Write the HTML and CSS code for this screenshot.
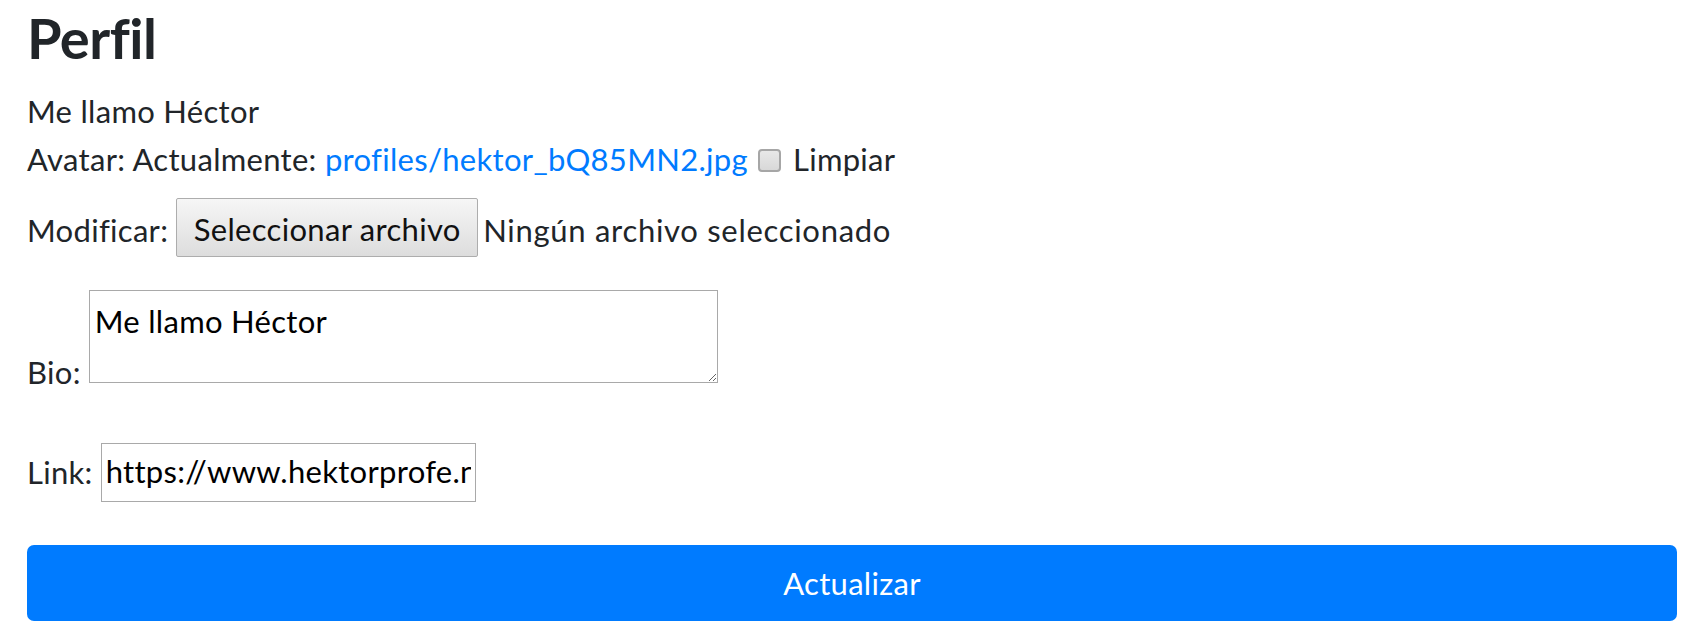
FILE: index.html
```html
<!DOCTYPE html>
<html lang="es">
<head>
<meta charset="utf-8">
<title>Perfil</title>
<link rel="stylesheet" href="styles.css">
</head>
<body>
<main class="page">
  <h1 class="title">Perfil</h1>
  <form class="form">
    <p class="line first">Me llamo Héctor</p>
    <p class="line">Avatar: Actualmente: <a class="file-link" href="#">profiles/hektor_bQ85MN2.jpg</a><span class="check" role="checkbox" aria-checked="false"></span><label class="check-label">Limpiar</label></p>
    <div class="row file-row">
      <span class="lbl">Modificar:</span>
      <button type="button" class="file-btn">Seleccionar archivo</button>
      <span class="file-name">Ningún archivo seleccionado</span>
    </div>
    <div class="row bio-row">
      <label class="lbl bio-lbl" for="bio">Bio:</label>
      <textarea class="bio" id="bio">Me llamo Héctor</textarea>
    </div>
    <div class="row link-row">
      <label class="lbl link-lbl" for="link">Link:</label>
      <input class="link" id="link" type="text" value="https://www.hektorprofe.net">
    </div>
    <button type="submit" class="submit">Actualizar</button>
  </form>
</main>
</body>
</html>
```
FILE: styles.css
```css
html, body {
  margin: 0;
  padding: 0;
  background: #ffffff;
}

body {
  font-family: Lato, "Open Sans", "Liberation Sans", sans-serif;
  font-size: 31px;
  letter-spacing: 0.3px;
  color: #212529;
  font-variant-ligatures: none;
}

.page {
  padding: 0 31px 0 27px;
}

.title {
  margin: 4px 0 0;
  font-size: 56px;
  line-height: 67px;
  font-weight: 700;
  letter-spacing: -0.5px;
  color: #212529;
  font-variant-ligatures: none;
}

.form {
  display: flex;
  flex-direction: column;
}

.line {
  margin: 0;
  line-height: 48px;
}

.line.first {
  margin-top: 16px;
}

.file-link {
  color: #007bff;
  text-decoration: none;
}

.check {
  display: inline-block;
  box-sizing: border-box;
  width: 23px;
  height: 23px;
  margin: 0 12px 0 10px;
  vertical-align: -1px;
  border: 2px solid #a6a6a6;
  border-radius: 4px;
  background: linear-gradient(#e8e8e8, #d8d8d8);
}

.row {
  display: flex;
  align-items: flex-end;
}

.lbl {
  line-height: 48px;
  margin-right: 8px;
  padding-bottom: 3px;
}

.file-row {
  margin-top: 15px;
}

.file-btn {
  box-sizing: border-box;
  width: 302px;
  height: 59px;
  padding: 10px 0 6px;
  border: 1px solid #adadad;
  border-radius: 2px;
  background: linear-gradient(#f6f6f6, #dddddd);
  font-family: inherit;
  font-size: 31px;
  letter-spacing: 0.3px;
  line-height: 41px;
  color: #111111;
}

.file-name {
  line-height: 48px;
  margin-left: 5px;
  padding-bottom: 3px;
  letter-spacing: 0.7px;
}

.bio-row {
  margin-top: 33px;
}

.bio-lbl {
  padding-bottom: 0;
  margin-bottom: -12.6px;
}

.bio {
  box-sizing: border-box;
  width: 629px;
  height: 93px;
  margin: 0;
  padding: 12px 5px 0;
  border: 1px solid #a9a9a9;
  font-family: inherit;
  font-size: 31px;
  letter-spacing: 0.3px;
  line-height: 36px;
  color: #000000;
}

.link-row {
  margin-top: 60px;
}

.link-lbl {
  padding-bottom: 6px;
}

.link {
  box-sizing: border-box;
  width: 375px;
  height: 59px;
  margin: 0;
  padding: 0 4px 3px;
  border: 1px solid #a9a9a9;
  border-radius: 0;
  font-family: inherit;
  font-size: 31px;
  letter-spacing: 0.3px;
  line-height: 36px;
  color: #000000;
}

.submit {
  margin-top: 43px;
  width: 100%;
  height: 76px;
  border: none;
  border-radius: 7px;
  background: #007bff;
  color: #ffffff;
  font-family: inherit;
  font-size: 31px;
  letter-spacing: 0.3px;
  line-height: 36px;
  padding: 0;
}
```
